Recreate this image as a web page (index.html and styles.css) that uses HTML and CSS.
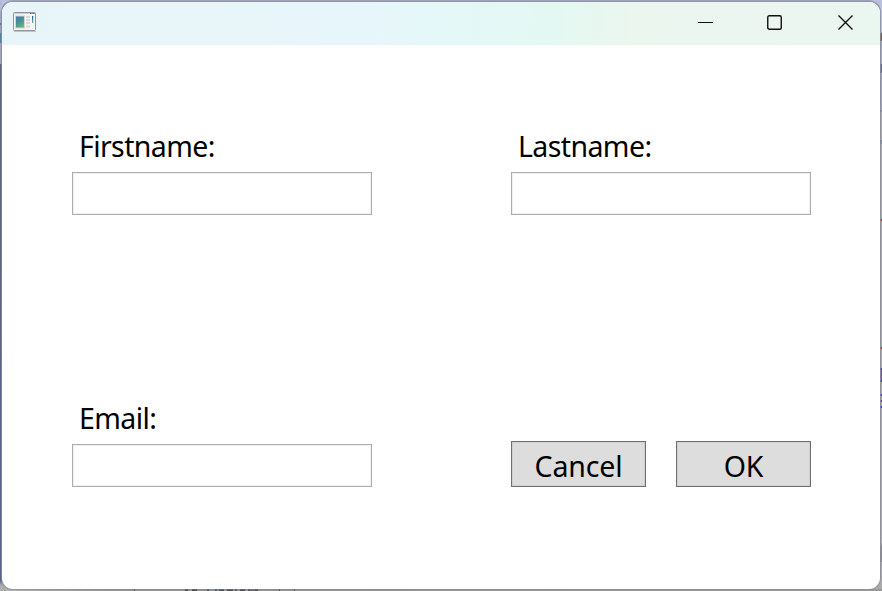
FILE: index.html
```html
<!DOCTYPE html>
<html lang="en">
<head>
<meta charset="utf-8">
<title>Window</title>
<link rel="stylesheet" href="styles.css">
</head>
<body>
<div class="window">
  <header class="titlebar">
    <svg class="app-icon" width="24" height="20" viewBox="0 0 24 20">
      <defs>
        <linearGradient id="pane" x1="0" y1="0" x2=".6" y2="1"><stop offset="0" stop-color="#4778b0"/><stop offset=".5" stop-color="#438f98"/><stop offset="1" stop-color="#65b779"/></linearGradient>
        <linearGradient id="bar" x1="0" y1="0" x2="0" y2="1"><stop offset="0" stop-color="#294b9b"/><stop offset=".55" stop-color="#398fa5"/><stop offset="1" stop-color="#5ac453"/></linearGradient>
      </defs>
      <rect x=".5" y=".5" width="22" height="18" rx="1" fill="#f5f5f5" stroke="#92979b"/>
      <path d="M1 1.500h21" stroke="#c5cacd"/>
      <path d="M17 1.500h1.500M19.500 1.500h2" stroke="#6b7075"/>
      <rect x="2.500" y="4" width="9" height="12" fill="url(#pane)" stroke="#d2d5d8"/>
      <path d="M13 5h4M13 8h4M13 11h4M13 14.500h4" stroke="#d6d8da" stroke-width="2"/>
      <rect x="19" y="4" width="1.200" height="7" fill="url(#bar)"/>
      <path d="M1 19.500h22" stroke="#b7c4c8"/>
    </svg>
    <div class="controls">
      <svg width="16" height="16" viewBox="0 0 16 16"><path d="M0 8.500h15"/></svg>
      <svg width="16" height="16" viewBox="0 0 16 16"><rect x=".75" y="1.750" width="13.500" height="13.500" rx="1.500"/></svg>
      <svg width="16" height="16" viewBox="0 0 16 16"><path d="M.5 1.500l14 14M14.500 1.500l-14 14"/></svg>
    </div>
  </header>
  <main class="form">
    <div class="field"><label for="first">Firstname:</label><input id="first"></div>
    <div class="field"><label for="last">Lastname:</label><input id="last"></div>
    <div class="field"><label for="email">Email:</label><input id="email"></div>
    <div class="actions"><button>Cancel</button><button>OK</button></div>
  </main>
</div>
</body>
</html>
```
FILE: styles.css
```css
* { box-sizing: border-box; }
body {
  margin: 0;
  width: 882px;
  height: 591px;
  padding: 2px;
  overflow: hidden;
  font-family: "Noto Sans", "Open Sans", sans-serif;
  color: #000;
  background:
    linear-gradient(#4a4b4b, #4a4b4b) 134px 589px / 1px 2px no-repeat,
    linear-gradient(90deg, #3e4f63 0 2px, #929392 2px 8px, #48515a 8px 10px, #929392 10px 12px, #48515a 12px 17px, #929392 17px 20px, #48515a 20px 26px, #929392 26px 28px, #48515a 28px 30px, #929392 30px 33px, #48515a 33px 38px, #929392 38px 41px, #48515a 41px 43px, #6b6b6b 43px 48px, #48515a 48px 51px) 207px 589px / 51px 2px no-repeat,
    linear-gradient(90deg, #484a49 0 3px, #929392 3px 7px, #484a49 7px) 185px 589px / 12px 2px no-repeat,
    linear-gradient(#4a4b4b, #4a4b4b) 279px 589px / 1px 2px no-repeat,
    linear-gradient(#4a4b4b, #4a4b4b) 294px 589px / 1px 2px no-repeat,
    linear-gradient(90deg, #b0b0b0, #929392 110px, #929392 300px, #999) 0 589px / 100% 2px no-repeat,
    linear-gradient(#b5bad6 0 10px, #a3a6ba 12px 23px, #4f82a6 23px 25px, #989fb5 25px 33px, #4f82a6 33px 43px, #a0a5b9 43px 64px, #5b6284 64px 160px, #56628c 560px, #56628c 580px, #b0b0b0 586px) 0 0 / 2px 100% no-repeat,
    linear-gradient(#bac1dd 0 32px, #685f58 34px 41px, #a4a8bb 41px 64px, #686e8c 64px 73px, #a1a5b7 73px 110px, #858b9a 110px 112px, #aaa 112px 140px, #858b9a 140px 144px, #aaa 144px 219px, #9e433b 219px 221px, #a7a7a7 221px 347px, #9e433b 347px 349px, #aaa 349px 368px, #4840b6 368px 370px, #725ca7 370px 380px, #4840b6 380px 382px, #aaa 382px 394px, #4840b6 394px 396px, #aaa 396px 400px, #744394 400px 402px, #aaa 402px 406px, #4840b6 406px 408px, #aaa 408px 542px, #8b8b8b 548px 562px, #aaa 562px) 880px 0 / 2px 100% no-repeat,
    linear-gradient(#b9bfdc 0 20px, #aaa 100px);
}
.window {
  height: 587px;
  width: 878px;
  border-radius: 11px;
  overflow: hidden;
  background: #fff;
  box-shadow: 0 0 0 1px #85889480, 0 -1px 0 1px #8f92a4a0;
}
.titlebar {
  height: 43px;
  display: flex;
  align-items: flex-start;
  justify-content: space-between;
  padding: 10px 27px 0 11px;
  background: linear-gradient(96deg, #e8f5f8 0, #e7f6fa 42%, #e3f8f7 52%, #e4f8f2 63%, #eaf6ee 72%, #eaf6f0 100%);
}
.app-icon { display: block; }
.controls { display: grid; grid-template-columns: 69px 71px 15px; padding-top: 2px; }
.controls svg {
  display: block;
  fill: none;
  stroke: #101210;
  stroke-width: 1.4;
}
.controls svg:first-child { stroke-width: 1; }
.form {
  display: grid;
  grid-template-columns: 300px 300px;
  column-gap: 139px;
  grid-template-rows: 272px 90px;
  padding: 80px 70px;
}
.field { display: flex; flex-direction: column; }
label {
  height: 47px;
  line-height: 42px;
  padding-left: 7px;
  font-size: 28.5px;
  letter-spacing: -.6px;
  white-space: nowrap;
}
input {
  width: 300px;
  height: 43px;
  padding: 0 6px;
  border: 1px solid #abadb3;
  border-radius: 0;
  background: #fff;
  box-shadow: inset 0 0 0 1px #f1f1f3;
  font: inherit;
  outline: 0;
}
.actions { display: flex; gap: 30px; align-items: flex-end; }
button {
  width: 135px;
  height: 46px;
  padding: 3px 0 0;
  border: 1px solid #707070;
  border-radius: 0;
  background: #ddd;
  box-shadow: inset 0 0 0 1px #d0d0d0;
  color: #000;
  font-family: inherit;
  font-size: 28.5px;
  letter-spacing: -.15px;
  line-height: 38px;
}
```
